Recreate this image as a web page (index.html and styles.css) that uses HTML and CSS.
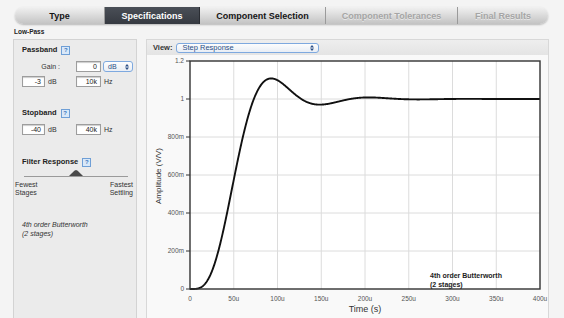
FILE: index.html
```html
<!DOCTYPE html>
<html lang="en">
<head>
    <meta charset="UTF-8">
    <title>Filter Wizard - Specifications</title>
    <link rel="stylesheet" href="styles.css">
</head>
<body>
    <div class="tabs">
        <div class="tab tab-type">Type</div>
        <div class="tab tab-spec active">Specifications</div>
        <div class="tab tab-comp">Component Selection</div>
        <div class="tab tab-tol disabled">Component Tolerances</div>
        <div class="tab tab-final disabled">Final Results</div>
    </div>
    <div class="filter-type">Low-Pass</div>

    <div class="main">
        <div class="spec-panel">
            <div class="group-title">Passband <span class="help">?</span></div>
            <div class="field-grid">
                <div class="gain-label">Gain :</div>
                <div class="input">0</div>
                <div class="unit-select">dB
                    <svg class="arrows" width="4" height="6" viewBox="0 0 4 6"><path d="M2 0L4 2.4H0zM2 6L4 3.6H0z" fill="#2b4f86"/></svg>
                </div>
                <div class="input">-3</div>
                <div class="unit">dB</div>
                <div class="input">10k</div>
                <div class="unit">Hz</div>
            </div>

            <div class="group-title stop-title">Stopband <span class="help">?</span></div>
            <div class="field-grid">
                <div class="input">-40</div>
                <div class="unit">dB</div>
                <div class="input">40k</div>
                <div class="unit">Hz</div>
            </div>

            <div class="group-title response-title">Filter Response <span class="help">?</span></div>
            <div class="slider">
                <div class="slider-track"></div>
                <div class="slider-thumb"></div>
            </div>
            <div class="slider-labels">
                <div>Fewest<br>Stages</div>
                <div class="right">Fastest<br>Settling</div>
            </div>
            <div class="summary">4th order Butterworth<br>(2 stages)</div>
        </div>

        <div class="chart-panel">
            <div class="chart-header">
                <span class="view-label">View:</span>
                <div class="view-select">Step Response
                    <svg class="arrows" width="4" height="6" viewBox="0 0 4 6"><path d="M2 0L4 2.4H0zM2 6L4 3.6H0z" fill="#2b4f86"/></svg>
                </div>
            </div>
            <svg class="chart" width="402" height="263" viewBox="0 0 402 263">
                <g transform="translate(-147,-55)">
                    <rect x="190" y="61" width="350" height="228" fill="#fff"/>
                    <g id="grid" stroke="#dcdcdc" stroke-width="1"></g>
                    <g id="yAxis" font-family="Liberation Sans, Arial, sans-serif" font-size="6.5" fill="#555" text-anchor="end"></g>
                    <g id="xAxis" font-family="Liberation Sans, Arial, sans-serif" font-size="6.5" fill="#555" text-anchor="middle"></g>
                    <path id="curve" fill="none" stroke="#111" stroke-width="1.9" stroke-linejoin="round"/>
                    <rect x="190" y="61" width="350" height="228" fill="none" stroke="#333" stroke-width="1.4"/>
                    <text x="365" y="312" font-family="Liberation Sans, Arial, sans-serif" font-size="9" fill="#333" text-anchor="middle">Time (s)</text>
                    <text transform="translate(161,176) rotate(-90)" font-family="Liberation Sans, Arial, sans-serif" font-size="8" fill="#333" text-anchor="middle">Amplitude (V/V)</text>
                    <text x="430" y="278" font-family="Liberation Sans, Arial, sans-serif" font-size="7" font-weight="bold" fill="#222">4th order Butterworth</text>
                    <text x="430" y="287" font-family="Liberation Sans, Arial, sans-serif" font-size="7" font-weight="bold" fill="#222">(2 stages)</text>
                </g>
            </svg>
        </div>
    </div>

    <script>
        const svgNS = 'http://www.w3.org/2000/svg';
        const plot = { left: 190, top: 61, width: 350, height: 228 };
        const tMax = 400e-6;
        const vMax = 1.2;

        function toX(t) { return plot.left + t / tMax * plot.width; }
        function toY(v) { return plot.top + plot.height - v / vMax * plot.height; }

        function addEl(parent, tag, attrs, text) {
            const el = document.createElementNS(svgNS, tag);
            for (const k in attrs) el.setAttribute(k, attrs[k]);
            if (text !== undefined) el.textContent = text;
            parent.appendChild(el);
            return el;
        }

        // grid lines + axis labels
        const grid = document.getElementById('grid');
        const xAxis = document.getElementById('xAxis');
        const yAxis = document.getElementById('yAxis');
        const xLabels = ['0', '50u', '100u', '150u', '200u', '250u', '300u', '350u', '400u'];
        const yLabels = ['0', '200m', '400m', '600m', '800m', '1', '1.2'];

        xLabels.forEach((label, i) => {
            const x = toX(i * 50e-6);
            if (i > 0 && i < xLabels.length - 1) {
                addEl(grid, 'line', { x1: x, y1: plot.top, x2: x, y2: plot.top + plot.height });
            }
            addEl(xAxis, 'text', { x: x, y: 301 }, label);
        });

        yLabels.forEach((label, i) => {
            const y = toY(i * 0.2);
            if (i > 0 && i < yLabels.length - 1) {
                addEl(grid, 'line', { x1: plot.left, y1: y, x2: plot.left + plot.width, y2: y });
            }
            addEl(yAxis, 'line', { x1: 186, y1: y, x2: 190, y2: y, stroke: '#333', 'stroke-width': 1 });
            addEl(yAxis, 'text', { x: 184, y: y + 2.3 }, label);
        });

        // 4th order Butterworth step response, two 2nd-order stages
        function stepResponse() {
            const w0 = 2 * Math.PI * 9600;
            const qs = [0.5412, 1.3066];
            let s = [0, 0, 0, 0];

            function deriv(st) {
                const a1 = w0 * w0 * (1 - st[0]) - (w0 / qs[0]) * st[1];
                const a2 = w0 * w0 * (st[0] - st[2]) - (w0 / qs[1]) * st[3];
                return [st[1], a1, st[3], a2];
            }

            const dt = 1e-7;
            const steps = Math.round(tMax / dt);
            const points = [[0, 0]];
            for (let n = 1; n <= steps; n++) {
                const k1 = deriv(s);
                const k2 = deriv(s.map((v, i) => v + k1[i] * dt / 2));
                const k3 = deriv(s.map((v, i) => v + k2[i] * dt / 2));
                const k4 = deriv(s.map((v, i) => v + k3[i] * dt));
                s = s.map((v, i) => v + dt / 6 * (k1[i] + 2 * k2[i] + 2 * k3[i] + k4[i]));
                if (n % 4 === 0) points.push([n * dt, s[2]]);
            }
            return points;
        }

        const d = stepResponse()
            .map((p, i) => (i === 0 ? 'M' : 'L') + toX(p[0]).toFixed(2) + ' ' + toY(p[1]).toFixed(2))
            .join(' ');
        document.getElementById('curve').setAttribute('d', d);
    </script>
</body>
</html>
```

FILE: styles.css
```css
body {
    margin: 0;
    padding: 0;
    width: 564px;
    height: 318px;
    overflow: hidden;
    background-color: #f4f4f4;
    font-family: "Liberation Sans", Arial, Helvetica, sans-serif;
    color: #333;
}

/* Wizard tabs */
.tabs {
    display: flex;
    margin: 7px 0 0 15px;
    width: 533px;
    height: 17px;
    border-radius: 9px;
    overflow: hidden;
    background: linear-gradient(#f1f1f1, #d8d8d8 55%, #c3c3c3);
    box-shadow: 0 1px 2px rgba(0, 0, 0, 0.25);
}
.tab {
    display: flex;
    align-items: center;
    justify-content: center;
    font-size: 9px;
    font-weight: bold;
    color: #151515;
    border-right: 1px solid #9a9a9a;
    box-sizing: border-box;
}
.tab:last-child {
    border-right: none;
}
.tab-type { width: 90px; }
.tab-spec { width: 95px; }
.tab-comp { width: 126px; }
.tab-tol { width: 132px; }
.tab-final { width: 90px; }
.tab.active {
    background: linear-gradient(#4a4f57, #363a41);
    color: #fff;
    border-right-color: #2a2d33;
}
.tab.disabled {
    color: #a5a5a5;
    text-shadow: 0 1px 0 rgba(255, 255, 255, 0.5);
}

.filter-type {
    margin: 4px 0 0 14px;
    font-size: 6.5px;
    font-weight: bold;
    line-height: 8px;
    color: #222;
}

.main {
    display: flex;
    gap: 9px;
    margin: 3px 0 0 13px;
}

/* Left specification panel */
.spec-panel {
    width: 124px;
    height: 290px;
    box-sizing: border-box;
    background-color: #ebebeb;
    border: 1px solid #d3d3d3;
    padding: 5px 0 0 8px;
}
.group-title {
    font-size: 7.5px;
    font-weight: bold;
    line-height: 10px;
    color: #222;
    display: flex;
    align-items: center;
    gap: 4px;
}
.help {
    display: inline-flex;
    align-items: center;
    justify-content: center;
    width: 7px;
    height: 7px;
    border: 1px solid #6f9fd6;
    background-color: #d9e8f8;
    color: #3d78c0;
    font-size: 6px;
    font-weight: bold;
    line-height: 7px;
}
.field-grid {
    display: grid;
    grid-template-columns: 23px 31px 25px 1fr;
    grid-auto-rows: 11px;
    row-gap: 4px;
    margin-top: 6px;
    font-size: 7px;
}
.gain-label {
    grid-column: 1 / 3;
    text-align: right;
    padding-right: 16px;
    line-height: 11px;
}
.input {
    background-color: #fff;
    border: 1px solid #9d9d9d;
    box-shadow: inset 0 1px 1px rgba(0, 0, 0, 0.2);
    box-sizing: border-box;
    text-align: right;
    padding-right: 3px;
    line-height: 9px;
    color: #222;
}
.unit {
    padding-left: 3px;
    line-height: 11px;
}
.unit-select {
    margin-left: 2px;
    width: 30px;
    box-sizing: border-box;
    border: 1px solid #7ea9df;
    border-radius: 3px;
    background: linear-gradient(#fdfdfd, #e9eef5);
    color: #2b4f86;
    line-height: 9px;
    padding-left: 4px;
    display: flex;
    align-items: center;
    justify-content: space-between;
    padding-right: 3px;
}
.stop-title {
    margin-top: 21px;
}
.response-title {
    margin-top: 22px;
}
.slider {
    position: relative;
    height: 12px;
    margin-left: 2px;
    width: 104px;
}
.slider-track {
    position: absolute;
    left: 0;
    right: 0;
    top: 9px;
    height: 1px;
    background-color: #9a9a9a;
}
.slider-thumb {
    position: absolute;
    left: 45px;
    top: 3px;
    width: 14px;
    height: 6px;
    background-color: #4a4a4a;
    clip-path: polygon(0 100%, 38% 12%, 50% 0, 62% 12%, 100% 100%);
}
.slider-labels {
    display: flex;
    justify-content: space-between;
    margin: 2px 3px 0 -7px;
    font-size: 7px;
    line-height: 8px;
    color: #333;
}
.slider-labels .right {
    text-align: right;
}
.summary {
    margin-top: 23px;
    font-size: 7px;
    font-style: italic;
    line-height: 9px;
    color: #333;
}

/* Chart panel */
.chart-panel {
    width: 403px;
    height: 290px;
    box-sizing: border-box;
    background-color: #f9f9f9;
    border: 1px solid #d8d8d8;
}
.chart-header {
    height: 15px;
    display: flex;
    align-items: center;
    gap: 4px;
    padding-left: 6px;
    background: linear-gradient(#eeeeee, #e4e4e4);
}
.view-label {
    font-size: 7.5px;
    font-weight: bold;
    color: #333;
}
.view-select {
    width: 143px;
    height: 10px;
    box-sizing: border-box;
    border: 1px solid #7ea9df;
    border-radius: 3px;
    background: linear-gradient(#fdfdfd, #e9eef5);
    color: #2b4f86;
    font-size: 7.5px;
    line-height: 8px;
    padding: 0 4px 0 5px;
    display: flex;
    align-items: center;
    justify-content: space-between;
}
.chart {
    display: block;
}
```
